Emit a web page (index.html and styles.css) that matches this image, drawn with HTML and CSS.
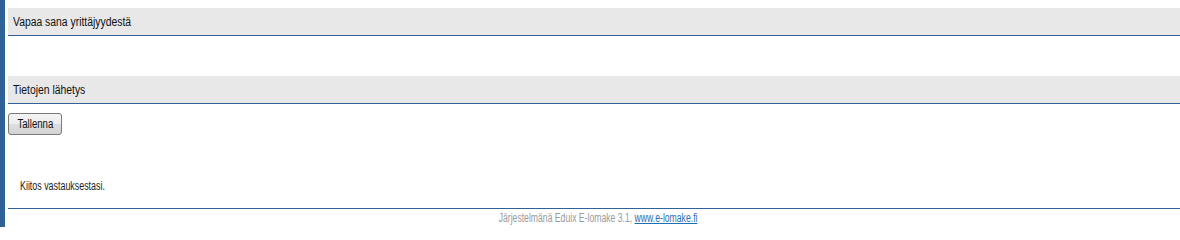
FILE: index.html
```html
<!DOCTYPE html>
<html lang="fi">
<head>
<meta charset="utf-8">
<title>E-lomake</title>
<link rel="stylesheet" href="styles.css">
</head>
<body>
<div class="page">
  <div class="section-head"><span class="narrow head-text">Vapaa sana yrittäjyydestä</span></div>
  <div class="section-body"></div>
  <div class="section-head"><span class="narrow head-text">Tietojen lähetys</span></div>
  <div class="actions"><button class="btn" type="button"><span class="narrow btn-text">Tallenna</span></button></div>
  <p class="thanks"><span class="narrow thanks-text">Kiitos vastauksestasi.</span></p>
  <div class="footer"><span class="narrow footer-text">Järjestelmänä Eduix E-lomake 3.1, <a href="#" class="footer-link">www.e-lomake.fi</a></span></div>
</div>
</body>
</html>
```

FILE: styles.css
```css
html, body {
  margin: 0;
  padding: 0;
  background: #ffffff;
}
body {
  border-left: 5px solid #2f6398;
  min-height: 227px;
  box-sizing: border-box;
  font-family: "Liberation Sans", Arial, sans-serif;
  font-size: 12px;
  color: #222222;
}
.page {
  padding: 8px 0 0 3px;
}
.narrow {
  display: inline-block;
  white-space: nowrap;
}
.section-head {
  background: #e8e8e8;
  border-bottom: 1px solid #2f6398;
  height: 25px;
  padding-top: 2px;
  line-height: 25px;
  padding-left: 5px;
  font-size: 12.5px;
  color: #111111;
}
.head-text {
  transform: scaleX(0.83);
  transform-origin: left center;
}
.section-body {
  height: 40px;
}
.actions {
  padding-top: 9px;
  line-height: 0;
}
.btn {
  font-family: inherit;
  font-size: 12px;
  line-height: 20px;
  width: 54px;
  height: 22px;
  padding: 0 0 0 1px;
  border: 1px solid #7a7a7a;
  border-radius: 3px;
  background: linear-gradient(#f4f4f4 0%, #ececec 50%, #dedede 51%, #d4d4d4 100%);
  color: #111111;
}
.btn-text {
  transform: scaleX(0.8);
  transform-origin: center center;
}
.thanks {
  margin: 0;
  padding: 44px 0 0 12px;
  font-size: 12.5px;
  line-height: 14px;
  color: #222222;
}
.thanks-text {
  transform: scaleX(0.71);
  transform-origin: left center;
}
.footer {
  margin-top: 15px;
  border-top: 1px solid #2f6398;
  text-align: center;
  color: #9a9a9a;
  font-size: 12px;
  padding: 2px 0 0 9px;
  line-height: 14px;
}
.footer-text {
  transform: scaleX(0.72);
  transform-origin: center center;
}
.footer-link {
  color: #1f70b2;
  text-decoration: underline;
}
```
